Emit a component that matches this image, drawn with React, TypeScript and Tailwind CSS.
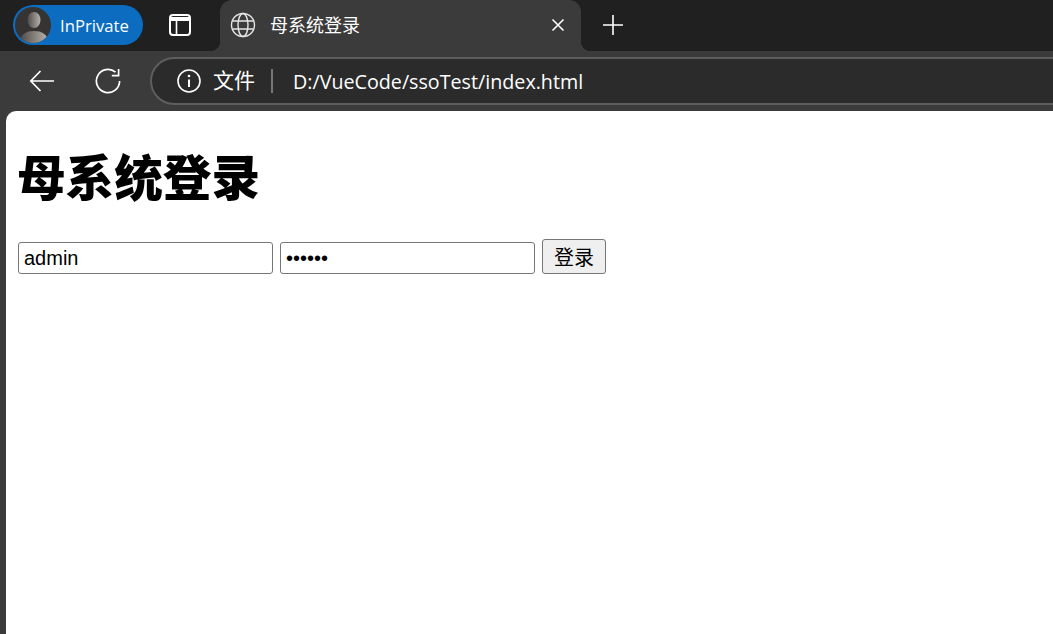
import React from "react";

const cjk = "[font-family:'Liberation_Sans','Noto_Sans_CJK_SC',sans-serif]";

function Avatar() {
  return (
    <div className="relative h-9 w-9 shrink-0 overflow-hidden rounded-full bg-[#363433]">
      <svg width="36" height="36" viewBox="0 0 36 36">
        <defs>
          <linearGradient id="person" x1="0" y1="0" x2="1" y2="0">
            <stop offset="0" stopColor="#4e4a48" />
            <stop offset="1" stopColor="#b8b2aa" />
          </linearGradient>
        </defs>
        <ellipse cx="19" cy="13" rx="6.5" ry="8" fill="url(#person)" />
        <path d="M5 36c0-9 6-12 14-12s14 3 14 12z" fill="url(#person)" />
      </svg>
    </div>
  );
}

function TabsIcon() {
  return (
    <svg width="24" height="24" viewBox="0 0 24 24" fill="none" stroke="#fff" strokeWidth="2">
      <rect x="2" y="2" width="20" height="20" rx="3" />
      <path d="M2 6h20" strokeWidth="4" />
      <path d="M8.5 7v15" strokeWidth="1.6" />
    </svg>
  );
}

function GlobeIcon() {
  return (
    <svg width="26" height="26" viewBox="0 0 26 26" fill="none" stroke="#e6e6e6" strokeWidth="1.4">
      <circle cx="13" cy="13" r="11.5" />
      <ellipse cx="13" cy="13" rx="5" ry="11.5" />
      <path d="M2.6 9h20.8M2.6 17h20.8" />
    </svg>
  );
}

function Tab() {
  return (
    <div className="relative flex h-[51px] w-[361px] items-center rounded-t-[12px] bg-[#3b3b3b] pb-[1px] pl-[10px] pr-[15px]">
      {/* flared bottom corners */}
      <div className="absolute bottom-0 left-[-10px] h-[10px] w-[10px] bg-[radial-gradient(circle_at_0_0,#202020_10px,#3b3b3b_10.5px)]" />
      <div className="absolute bottom-0 right-[-10px] h-[10px] w-[10px] bg-[radial-gradient(circle_at_100%_0,#202020_10px,#3b3b3b_10.5px)]" />
      <GlobeIcon />
      <span className={`ml-[14px] mt-[2px] flex-1 text-[18px] text-white ${cjk}`}>母系统登录</span>
      <svg width="16" height="16" viewBox="0 0 16 16" fill="none" stroke="#fff" strokeWidth="1.6">
        <path d="M2.5 2.5l11 11M13.5 2.5l-11 11" />
      </svg>
    </div>
  );
}

function TitleBar() {
  return (
    <div className="flex h-[51px] items-center bg-[#202020]">
      <div className="ml-[13px] mb-[1px] flex h-[40px] w-[130px] items-center rounded-full bg-[#0b6cc0] pl-[2px]">
        <Avatar />
        <span className="ml-[9px] mt-[2px] font-['Open_Sans',sans-serif] text-[16.7px] text-white">InPrivate</span>
      </div>
      <div className="ml-[25px] mr-[28px] mb-[1px]">
        <TabsIcon />
      </div>
      <Tab />
      <svg className="ml-[21px] mb-[1px]" width="22" height="22" viewBox="0 0 22 22" fill="none" stroke="#fff" strokeWidth="1.6">
        <path d="M11 1v20M1 11h20" />
      </svg>
    </div>
  );
}

function Toolbar() {
  return (
    <div className="flex h-[60px] items-center bg-[#3b3b3b] pl-[29px]">
      <svg width="26" height="24" viewBox="0 0 26 24" fill="none" stroke="#fff" strokeWidth="1.7">
        <path d="M25 12H2M11.5 2L1.8 12l9.7 10" />
      </svg>
      <svg className="ml-[40px]" width="26" height="26" viewBox="0 0 26 26" fill="none" stroke="#fff" strokeWidth="1.7">
        <path d="M20.5 4.2A11.6 11.6 0 1 0 24.6 13" />
        <path d="M23.6 1v6.6H16.8" />
      </svg>
      <div className="ml-[29px] flex h-[48px] flex-1 items-center rounded-l-full border-y-2 border-l-2 border-[#5e5e5e] bg-[#2b2b2b] pl-[25px]">
        <svg width="24" height="24" viewBox="0 0 24 24" fill="none" stroke="#fff" strokeWidth="1.6">
          <circle cx="12" cy="12" r="11" />
          <path d="M12 10.5v7.5" strokeWidth="2" />
          <circle cx="12" cy="7" r="1.3" fill="#fff" stroke="none" />
        </svg>
        <span className={`ml-[12px] text-[21px] text-white ${cjk}`}>文件</span>
        <div className="ml-[16px] h-[24px] w-[2px] bg-[#777777]" />
        <span className="ml-[20px] mt-[2px] font-['Open_Sans',sans-serif] text-[19.7px] text-white">D:/VueCode/ssoTest/index.html</span>
      </div>
    </div>
  );
}

export default function App() {
  return (
    <div className="flex h-[634px] w-[1053px] flex-col overflow-hidden bg-[#3b3b3b]">
      <TitleBar />
      <Toolbar />
      <main className="ml-[6px] flex-1 rounded-tl-[10px] bg-white pl-[12px] pt-[33px] text-black">
        <h1 className={`ml-[-1px] text-[48.6px] leading-[70px] font-black ${cjk}`}>母系统登录</h1>
        <form className="mt-[25px] flex items-end gap-[7px]">
          <input
            type="text"
            defaultValue="admin"
            className={`h-[32px] w-[255px] rounded-[3px] border border-[#767676] px-[5px] text-[20px] outline-none ${cjk}`}
          />
          <input
            type="password"
            defaultValue="123456"
            className={`h-[32px] w-[255px] rounded-[3px] border border-[#767676] px-[5px] text-[20px] outline-none ${cjk}`}
          />
          <button
            type="button"
            className={`h-[35px] w-[64px] rounded-[3px] border border-[#767676] bg-[#efefef] pt-[2px] text-[20px] ${cjk}`}
          >
            登录
          </button>
        </form>
      </main>
    </div>
  );
}
